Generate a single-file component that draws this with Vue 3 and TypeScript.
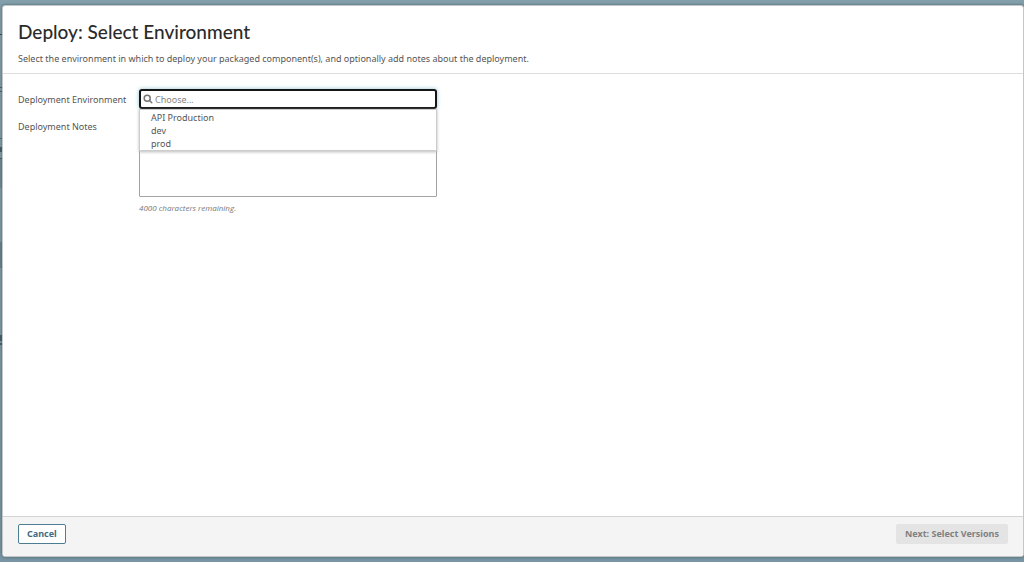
<script setup lang="ts">
import { computed, ref } from 'vue'

const environments: string[] = ['API Production', 'dev', 'prod']
const environment = ref('')
const notes = ref('')
const maxLength = 4000
const remaining = computed(() => maxLength - notes.value.length)
const open = ref(true)

function choose(name: string) {
  environment.value = name
  open.value = false
}
</script>

<template>
  <div class="backdrop">
    <section class="dialog" role="dialog" aria-labelledby="dialog-title">
      <header class="head">
        <h1 id="dialog-title">Deploy: Select Environment</h1>
        <p>Select the environment in which to deploy your packaged component(s), and optionally add notes about the deployment.</p>
      </header>

      <form id="deploy" class="body" @submit.prevent>
        <label for="environment">Deployment Environment</label>
        <div class="picker">
          <div class="search">
            <svg viewBox="0 0 10 10" aria-hidden="true">
              <circle cx="4.2" cy="4.2" r="3" />
              <path d="M6.5 6.5 8.8 8.8" />
            </svg>
            <input id="environment" v-model="environment" type="text" placeholder="Choose..." autocomplete="off" @focus="open = true" />
          </div>
          <ul v-if="open" class="menu">
            <li v-for="name in environments" :key="name">
              <button type="button" @click="choose(name)">{{ name }}</button>
            </li>
          </ul>
        </div>

        <label for="notes">Deployment Notes</label>
        <div class="notes">
          <textarea id="notes" v-model="notes" :maxlength="maxLength"></textarea>
          <p>{{ remaining }} characters remaining.</p>
        </div>
      </form>

      <footer class="foot">
        <button type="button" class="cancel">Cancel</button>
        <button type="submit" form="deploy" class="next" disabled>Next: Select Versions</button>
      </footer>
    </section>
  </div>
</template>

<style>
body {
  background: #7c9aa7;
}
</style>

<style scoped>
.backdrop {
  box-sizing: border-box;
  display: flex;
  min-height: 100vh;
  padding: 5px 0 5px 2px;
  font-family: "Noto Sans", "Open Sans", sans-serif;
  font-size: 9px;
  line-height: 13px;
  color: #555;
  /* dimmed page rows showing at the left edge of the dialog */
  background:
    linear-gradient(
      transparent 34px, #304550 34px 35px, transparent 35px 87px,
      #405966 87px 88px, transparent 88px 91px, #405966 91px 92px, transparent 92px 138px,
      #526d7a 138px 139px, transparent 139px 147px, #405966 147px 152px, transparent 152px 158px,
      #405966 158px 159px, #6d8794 159px 188px, transparent 188px 242px,
      #667f8c 242px 268px, transparent 268px 335px, #405966 335px 341px,
      transparent 341px 343px, #405966 343px 345px, transparent 345px
    ) left top / 2px 100% no-repeat,
    linear-gradient(#829fab, #7795a2);
}

.dialog {
  box-sizing: border-box;
  display: flex;
  flex: 1;
  flex-direction: column;
  border: 1px solid #c4c6c7;
  border-radius: 3px;
  background: #fff;
  box-shadow: 0 0 3px #465d68;
  overflow: hidden;
}

h1,
p,
ul {
  margin: 0;
  padding: 0;
}

.head {
  padding: 14px 15px 8px;
  border-bottom: 1px solid #ddd;
}

h1 {
  margin-bottom: 8px;
  font-family: Lato, "Open Sans", sans-serif;
  font-size: 19px;
  font-weight: 500;
  line-height: 24px;
  color: #2b2b2b;
}

.body {
  display: grid;
  flex: 1;
  grid-template-columns: 113px minmax(0, 298px);
  grid-template-rows: 20px auto 1fr;
  gap: 7px 8px;
  padding: 15px;
}

label {
  padding-top: 4px;
  white-space: nowrap;
}

.picker {
  position: relative;
}

.search {
  box-sizing: border-box;
  display: flex;
  align-items: center;
  gap: 2px;
  height: 20px;
  padding: 0 2px;
  border: 2px solid #151515;
  border-radius: 3px;
  background: #fff;
  box-shadow: 0 0 4px #8fc4d0;
}

.search svg {
  flex: none;
  width: 10px;
  height: 10px;
  fill: none;
  stroke: #757575;
  stroke-width: 1.5;
  stroke-linecap: round;
}

.search input {
  flex: 1;
  min-width: 0;
  padding: 0;
  border: 0;
  outline: 0;
  background: none;
  font: inherit;
  color: #555;
}

.search input::placeholder {
  color: #858585;
  opacity: 1;
}

.menu {
  position: absolute;
  top: 100%;
  left: 0;
  right: 0;
  padding: 1px 0 0;
  border: 1px solid #ccc;
  background: #fff;
  box-shadow: 0 1px 3px #bbb;
  list-style: none;
}

.menu button {
  display: block;
  width: 100%;
  padding: 0 11px;
  border: 0;
  background: none;
  font: inherit;
  color: #555;
  text-align: left;
}

textarea {
  box-sizing: border-box;
  display: block;
  width: 100%;
  height: 81px;
  margin-bottom: 4px;
  padding: 4px;
  border: 1px solid #a3a3a3;
  border-radius: 1px;
  outline: 0;
  resize: none;
  font: inherit;
  color: #555;
}

.notes p {
  font-family: "Open Sans", "Noto Sans", sans-serif;
  font-size: 8px;
  font-style: italic;
  color: #777;
}

.foot {
  display: flex;
  justify-content: space-between;
  padding: 7px 15px 12px;
  border-top: 1px solid #d4d4d4;
  background: #f4f4f4;
}

.foot button {
  padding: 1px 8px;
  border: 1px solid #4d7d92;
  border-radius: 2px;
  background: #fff;
  font: inherit;
  font-weight: 700;
  line-height: 16px;
  color: #416c82;
}

.foot .next {
  border-color: #e4e4e4;
  background: #e4e4e4;
  color: #808080;
}
</style>
